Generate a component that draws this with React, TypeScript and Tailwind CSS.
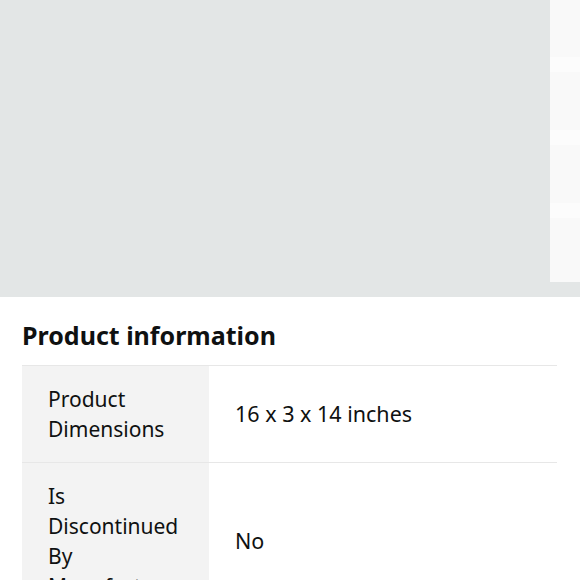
import React from "react";

const rows = [
  { label: "Product Dimensions", value: "16 x 3 x 14 inches" },
  { label: "Is Discontinued By Manufacturer", value: "No" },
];

export default function App() {
  return (
    <div className="w-[580px] h-[580px] overflow-hidden bg-white text-[#0f1111] font-['Noto_Sans',sans-serif]">
      {/* image gallery */}
      <div className="flex h-[297px] bg-[#e3e6e6]">
        <div className="flex-1" />
        <div className="w-[30px] h-[282px] flex flex-col gap-[15px] bg-[#fcfcfc]">
          <div className="h-[57px] bg-[#f9f9f9]" />
          <div className="h-[58px] bg-[#f9f9f9]" />
          <div className="h-[58px] bg-[#f9f9f9]" />
          <div className="flex-1 bg-[#f9f9f9]" />
        </div>
      </div>

      <section className="px-[22px] pt-[20px]">
        <h2 className="text-[25px] font-bold leading-[36px] mb-[12px]">Product information</h2>
        <div className="w-[535px] border-t border-[#e7e7e7]">
          {rows.map((r) => (
            <div key={r.label} className="flex border-b border-[#e7e7e7]">
              <div className="w-[187px] shrink-0 bg-[#f3f3f3] pl-[26px] pr-[20px] py-[18px] text-[21px] leading-[30px]">
                {r.label}
              </div>
              <div className="flex-1 flex items-center pl-[26px] text-[21.5px] leading-[30px]">
                {r.value}
              </div>
            </div>
          ))}
        </div>
      </section>
    </div>
  );
}
